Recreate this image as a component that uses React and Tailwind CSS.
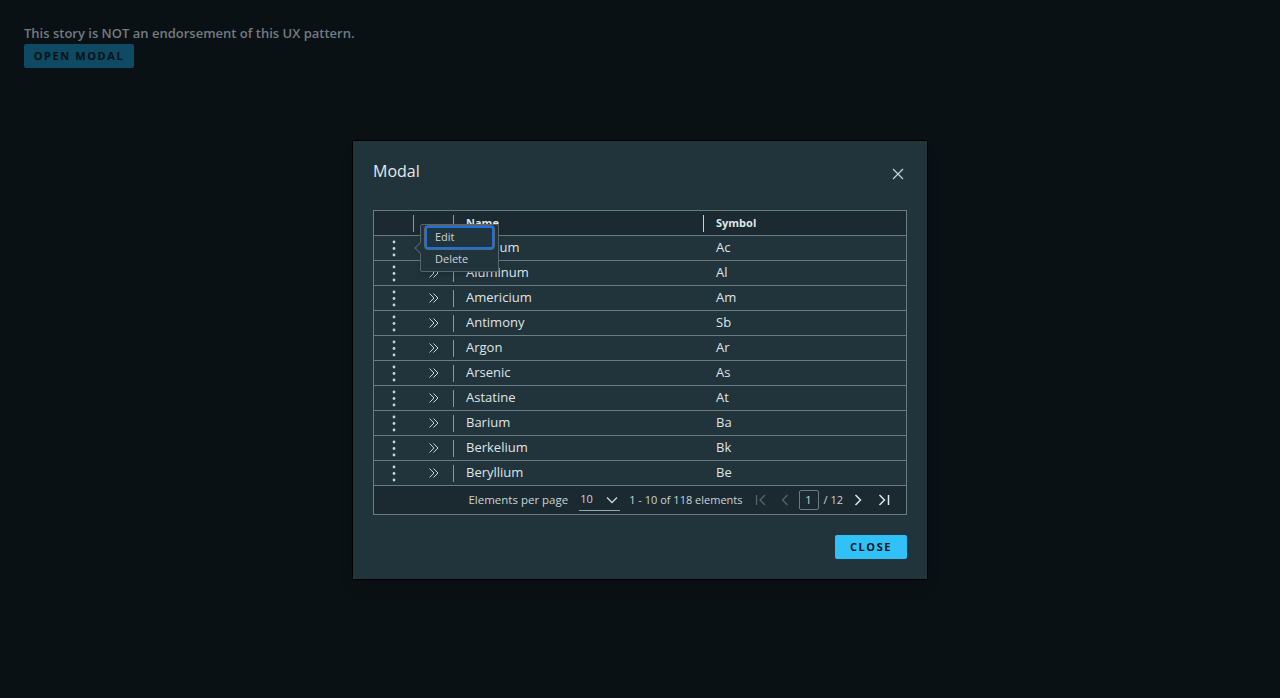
import React from "react";

const rows = [
  ["Actinium", "Ac"],
  ["Aluminum", "Al"],
  ["Americium", "Am"],
  ["Antimony", "Sb"],
  ["Argon", "Ar"],
  ["Arsenic", "As"],
  ["Astatine", "At"],
  ["Barium", "Ba"],
  ["Berkelium", "Bk"],
  ["Beryllium", "Be"],
];

const Dots = () => (
  <svg width="4" height="17" viewBox="0 0 4 17" fill="#c9d3d8">
    <circle cx="2" cy="2" r="1.4" />
    <circle cx="2" cy="8.5" r="1.4" />
    <circle cx="2" cy="15" r="1.4" />
  </svg>
);

const DoubleChevron = () => (
  <svg width="12" height="12" viewBox="0 0 12 12" fill="none" stroke="#c9d3d8" strokeWidth="1">
    <path d="M1.5 1.5 L6 6 L1.5 10.5" />
    <path d="M5.5 1.5 L10 6 L5.5 10.5" />
  </svg>
);

export default function App() {
  const font = { fontFamily: "'Open Sans', 'Noto Sans', sans-serif" };
  return (
    <div className="w-[1280px] h-[698px] bg-[#0a1115] relative overflow-hidden" style={font}>
      <div className="pl-6 pt-[25px]">
        <p className="text-[13px] font-semibold text-[#737b80] leading-[16px]">
          This story is NOT an endorsement of this UX pattern.
        </p>
        <button className="mt-[3px] h-6 w-[110px] bg-[#0e4a62] rounded-[2px] text-[11px] font-bold tracking-[1.6px] text-[#0a1115]">
          OPEN MODAL
        </button>
      </div>

      <div className="absolute left-[352px] top-[140px] w-[576px] h-[440px] bg-[#21333b] border border-black shadow-lg px-5 pt-[18px]">
        <div className="flex items-center justify-between h-6">
          <span className="text-[16px] text-[#e3e9ec]">Modal</span>
          <svg width="12" height="12" viewBox="0 0 12 12" stroke="#c9d3d8" strokeWidth="1.2" className="mr-[3px] mt-[5px]">
            <path d="M1 1 L11 11 M11 1 L1 11" />
          </svg>
        </div>

        <div className="mt-[27px] border border-[#6b7b82] text-[13px] text-[#dfe5e8] relative">
          <div className="flex h-[25px] bg-[#1b2a31] border-b border-[#6b7b82] items-center text-[11px] font-bold text-[#dfe5e8]">
            <div className="w-10 h-full flex items-center justify-end">
              <div className="w-px h-[17px] bg-[#8b979c]" />
            </div>
            <div className="w-10 h-full flex items-center justify-end">
              <div className="w-px h-[17px] bg-[#8b979c]" />
            </div>
            <div className="w-[250px] pl-3 flex items-center justify-between h-full">
              <span>Name</span>
              <div className="w-px h-[17px] bg-[#c9d3d8]" />
            </div>
            <div className="pl-3">Symbol</div>
          </div>
          {rows.map(([n, s]) => (
            <div key={n} className="flex h-[25px] border-b border-[#6b7b82] items-center">
              <div className="w-10 flex justify-center"><Dots /></div>
              <div className="w-10 flex items-center justify-end h-full">
                <div className="flex-1 flex justify-center"><DoubleChevron /></div>
                <div className="w-px h-[17px] bg-[#8b979c]" />
              </div>
              <div className="w-[250px] pl-3">{n}</div>
              <div className="pl-3">{s}</div>
            </div>
          ))}
          <div className="flex h-[29px] bg-[#1b2a31] border-t border-[#6b7b82] -mt-px items-center justify-end pr-[16px] text-[11px] text-[#c9d3d8]">
            <span className="text-[11.5px]">Elements per page</span>
            <div className="ml-[11px] w-[41px] h-[22px] border-b border-[#9aa6ab] flex items-center justify-between pl-px pr-[2px]">
              <span>10</span>
              <svg width="12" height="8" viewBox="0 0 12 8" fill="none" stroke="#c9d3d8" strokeWidth="1.4">
                <path d="M1 1.5 L6 6.5 L11 1.5" />
              </svg>
            </div>
            <span className="ml-[9px]">1 - 10 of 118 elements</span>
            <svg className="ml-[12px]" width="12" height="12" viewBox="0 0 12 12" fill="none" stroke="#56656c" strokeWidth="1.3">
              <path d="M1.5 1 V11 M10 1 L5 6 L10 11" />
            </svg>
            <svg className="ml-[14px]" width="8" height="12" viewBox="0 0 8 12" fill="none" stroke="#56656c" strokeWidth="1.3">
              <path d="M6.5 1 L1.5 6 L6.5 11" />
            </svg>
            <div className="ml-[10px] w-5 h-5 border border-[#6b7b82] rounded-[2px] flex items-center justify-center">1</div>
            <span className="ml-[5px]">/ 12</span>
            <svg className="ml-[11px]" width="8" height="12" viewBox="0 0 8 12" fill="none" stroke="#dfe5e8" strokeWidth="1.5">
              <path d="M1.5 1 L6.5 6 L1.5 11" />
            </svg>
            <svg className="ml-[16px]" width="12" height="12" viewBox="0 0 12 12" fill="none" stroke="#dfe5e8" strokeWidth="1.5">
              <path d="M1.5 1 L6.5 6 L1.5 11 M10.5 1 V11" />
            </svg>
          </div>

          <div className="absolute left-[46px] top-[13px] w-[79px] h-[48px] bg-[#21333b] border border-[#56656c] rounded-[2px] shadow-md px-[4px] pt-[1px] text-[11px] text-[#c9d3d8]">
            <div className="absolute -left-[5px] top-[19px] w-2 h-2 bg-[#21333b] border-l border-b border-[#56656c] rotate-45" />
            <div className="relative h-[23px] border-2 border-[#1f6fe0] rounded-[3px] flex items-center pl-[8px] outline outline-1 outline-[#ffffff40] bg-[#21333b]">Edit</div>
            <div className="h-5 flex items-center pl-[10px]">Delete</div>
          </div>
        </div>

        <div className="flex justify-end mt-5">
          <button className="h-6 w-[72px] bg-[#2fc1f7] rounded-[2px] text-[11px] font-bold tracking-[1.6px] text-[#0a1115]">
            CLOSE
          </button>
        </div>
      </div>
    </div>
  );
}
